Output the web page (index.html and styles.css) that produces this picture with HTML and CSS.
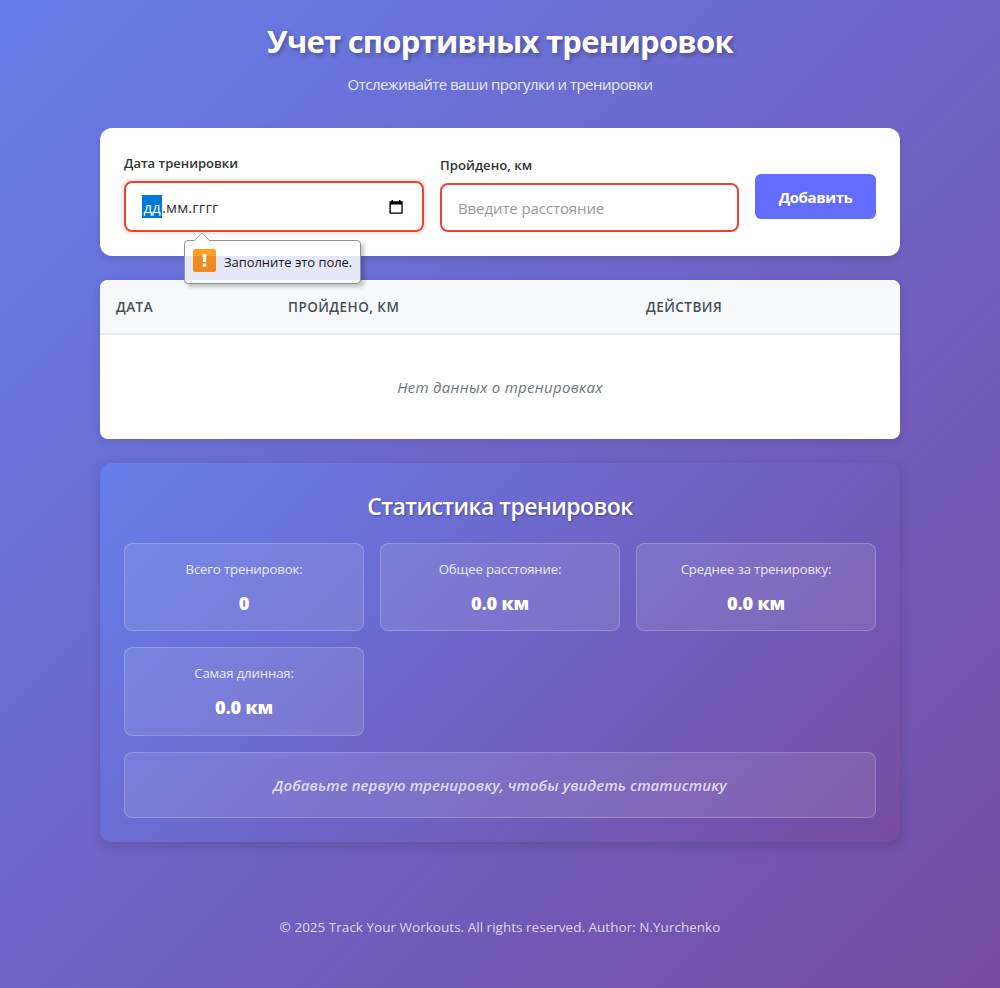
FILE: index.html
```html
<!DOCTYPE html>
<html lang="ru">
<head>
<meta charset="utf-8">
<title>Учет спортивных тренировок</title>
<link rel="stylesheet" href="styles.css">
</head>
<body>
<div class="container">
  <header class="header">
    <h1 class="title"><span>Учет спортивных тренировок</span></h1>
    <p class="subtitle"><span>Отслеживайте ваши прогулки и тренировки</span></p>
  </header>

  <form class="form-card">
    <div class="field field-date">
      <label class="label label-date">Дата тренировки</label>
      <div class="input input-focus">
        <span class="date"><span class="day">дд</span><span class="rest">.мм.гггг</span></span>
        <svg class="calendar" width="14" height="16" viewBox="0 0 14 16"><path fill="#000" fill-rule="evenodd" d="M2.500 1h1.600v1.300h5.800V1h1.600v1.300H13q.7 0 .7.7v11q0 .8-.7.8H1.200q-.8 0-.8-.8V3q0-.7.8-.7h1.300zM1.800 5.600v7.800h10.600V5.600z"/></svg>
      </div>
      <div class="bubble">
        <svg class="bubble-tip" width="18" height="10" viewBox="0 0 18 10"><path d="M0.500 9.500L9 1l8.500 8.500V10H.5z" fill="#fff"/><path d="M.8 9L9 .9 17.200 9" fill="none" stroke="#a0a0a0"/></svg>
        <span class="warn"><svg width="23" height="23" viewBox="0 0 23 23"><path fill="#f4f4f4" d="M9.500 5h4l-.5 8h-3zM9.700 14.600h3.600v3.200H9.700z"/></svg></span>
        <span class="bubble-text">Заполните это поле.</span>
      </div>
    </div>
    <div class="field">
      <label class="label label-km">Пройдено, км</label>
      <div class="input"><span class="placeholder">Введите расстояние</span></div>
    </div>
    <button class="add" type="button"><span>Добавить</span></button>
  </form>

  <section class="table">
    <div class="thead">
      <span class="th"><span class="th-date">ДАТА</span></span>
      <span class="th"><span class="th-km">ПРОЙДЕНО, КМ</span></span>
      <span class="th"><span class="th-act">ДЕЙСТВИЯ</span></span>
    </div>
    <p class="empty"><span>Нет данных о тренировках</span></p>
  </section>

  <section class="stats">
    <h2 class="stats-title"><span>Статистика тренировок</span></h2>
    <div class="grid">
      <div class="stat"><span class="stat-label">Всего тренировок:</span><span class="stat-value">0</span></div>
      <div class="stat"><span class="stat-label">Общее расстояние:</span><span class="stat-value">0.0 км</span></div>
      <div class="stat"><span class="stat-label">Среднее за тренировку:</span><span class="stat-value">0.0 км</span></div>
      <div class="stat"><span class="stat-label">Самая длинная:</span><span class="stat-value">0.0 км</span></div>
      <div class="message"><span>Добавьте первую тренировку, чтобы увидеть статистику</span></div>
    </div>
  </section>

  <footer class="footer"><span>© 2025 Track Your Workouts. All rights reserved. Author: N.Yurchenko</span></footer>
</div>
</body>
</html>
```
FILE: styles.css
```css
* { box-sizing: border-box; margin: 0; padding: 0; }
body {
  min-height: 988px;
  background: linear-gradient(135deg, #667eea 0%, #764ba2 100%);
  font-family: "Open Sans", "Noto Sans", sans-serif;
  color: #333;
  white-space: nowrap;
}
.container { width: 800px; margin: 0 auto; padding-top: 20px; }
.header { height: 108px; text-align: center; color: #fff; }
.title { font-size: 31px; line-height: 43px; letter-spacing: -.77px; font-weight: 700; text-shadow: 2px 2px 4px rgba(0,0,0,.3); }
.subtitle { margin-top: 9px; font-size: 15px; line-height: 24px; letter-spacing: -.53px; font-weight: 400; opacity: .85; }

.form-card {
  height: 128px; padding: 24px; border-radius: 12px; background: #fff;
  display: flex; align-items: flex-end; gap: 16px;
  box-shadow: 0 4px 6px rgba(0,0,0,.1);
}
.field { position: relative; width: 299px; display: flex; flex-direction: column; }
.field-date { width: 300px; }
.label { font-size: 13px; line-height: 20px; margin-bottom: 8px; font-weight: 600; }
.label-km { font-size: 13.200px; }
.input {
  height: 49px; padding: 0 16px; border: 2px solid #ea4335; border-radius: 8px;
  display: flex; align-items: center; background: #fff; font-size: 15px;
}
.input-focus { height: 51px; padding-right: 19px; justify-content: space-between; box-shadow: 0 0 0 3px rgba(234,67,53,.1); }
.date { display: flex; line-height: 23px; font-size: 15px; }
.day { width: 20px; height: 23px; padding-top: 1px; color: #fff; background: #0078d7; text-align: center; }
.rest { padding-top: 1px; letter-spacing: .1px; }
.placeholder { color: #999; letter-spacing: -.1px; }
.bubble {
  position: absolute; z-index: 2; left: 60px; top: 87px; width: 177px; height: 44px;
  border: 1px solid #929292; border-radius: 4px;
  background: linear-gradient(#fff 0 15px, #e7e8f7 15px 39px, #f8f9fc 39px);
  box-shadow: 3px 3px 4px rgba(0,0,0,.22);
  display: flex; align-items: center; padding: 0 8px; gap: 8px;
}
.bubble-tip { position: absolute; left: 8px; top: -9px; }
.warn { width: 23px; height: 23px; flex: none; margin-top: -3px; border-radius: 2px; background: linear-gradient(#ffa023 0 7px, #eb8b20 7px); }
.warn svg { display: block; }
.bubble-text { font-size: 13px; letter-spacing: -.05px; color: #171728; }
.add {
  width: 121px; height: 45px; margin-bottom: 13px; border: 0; border-radius: 6px;
  background: #646cff; color: #fff; font: 700 15px "Open Sans", sans-serif; letter-spacing: -.4px;
}

.table { margin-top: 24px; height: 159px; border-radius: 8px; overflow: hidden; background: #fff; box-shadow: 0 2px 8px rgba(0,0,0,.1); }
.thead {
  height: 55px; border-bottom: 2px solid #e9ecef; background: #f8f9fa;
  display: grid; grid-template-columns: 172px 358px 1fr; align-items: center;
  color: #495057; font-size: 13.500px; font-weight: 600; letter-spacing: .45px;
}
.th { padding-left: 16px; }
.empty { height: 104px; line-height: 104px; text-align: center; font-style: italic; font-size: 15px; letter-spacing: .3px; color: #6c757d; }

.stats {
  margin-top: 24px; height: 379px; padding: 24px; border-radius: 12px; color: #fff;
  background: linear-gradient(135deg, #667eea 0%, #764ba2 100%);
  box-shadow: 0 4px 12px rgba(0,0,0,.15);
}
.stats-title { height: 40px; line-height: 38px; margin-bottom: 16px; text-align: center; font-size: 23px; letter-spacing: -.57px; font-weight: 600; text-shadow: 1px 1px 2px rgba(0,0,0,.3); }
.grid { display: grid; grid-template-columns: repeat(3, 1fr); grid-template-rows: 88px 89px 66px; gap: 16px; }
.stat {
  padding: 15px 16px; border: 1px solid rgba(255,255,255,.2); border-radius: 8px; background: rgba(255,255,255,.1);
  display: flex; flex-direction: column; align-items: center; gap: 8px;
}
.stat-label { font-size: 13.200px; line-height: 21px; letter-spacing: -.15px; font-weight: 400; opacity: .85; }
.stat-value { font-size: 18.200px; line-height: 30px; font-weight: 800; letter-spacing: -.2px; }
.message {
  grid-column: 1 / -1; display: flex; align-items: center; justify-content: center;
  border: 1px solid rgba(255,255,255,.2); border-radius: 8px; background: rgba(255,255,255,.1);
  font-size: 15px; font-style: italic; font-weight: 600; letter-spacing: .1px; color: rgba(255,255,255,.75);
}
.footer { margin-top: 74px; line-height: 22px; text-align: center; font-size: 13.500px; letter-spacing: .02px; color: rgba(255,255,255,.75); }
```
